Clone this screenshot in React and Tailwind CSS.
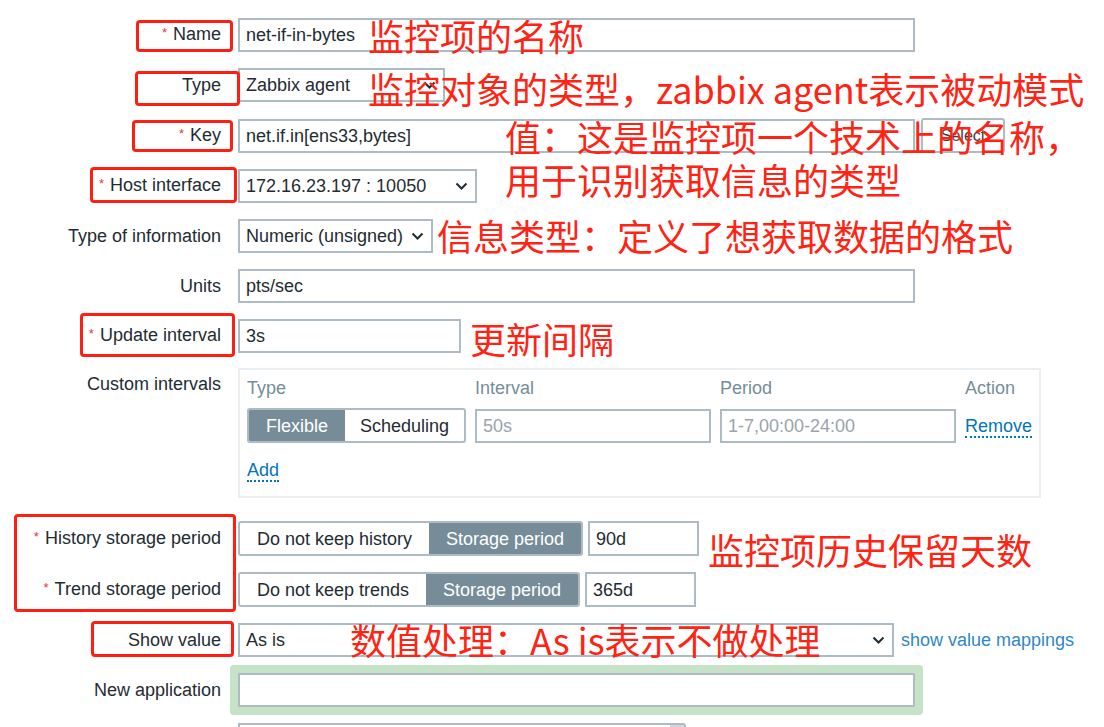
import React from "react"

const inputCls = "h-[34px] border-2 border-[#acbbc4] bg-white px-[6px] flex items-center text-[#1f2c33]"

function Chevron() {
  return (
    <svg width="13" height="8" viewBox="0 0 13 8" className="shrink-0">
      <polyline points="1.5,1.5 6.5,6.5 11.5,1.5" fill="none" stroke="#1f2c33" strokeWidth="2" />
    </svg>
  )
}

function Row({ label, req, top, children, className = "" }) {
  return (
    <div className={`flex ${top ? "items-start" : "items-center"} ${className}`}>
      <div className={`w-[221px] shrink-0 text-right text-[#1f2c33] ${top ? "pt-[6px]" : ""}`}>
        {req && <span className="text-[#e33734] text-[13px] relative -top-[3px] mr-[6px]">*</span>}
        {label}
      </div>
      <div className="ml-[17px] flex items-center">{children}</div>
    </div>
  )
}

function Select({ value, w }) {
  return (
    <div className={`${inputCls} justify-between pr-[7px] ${w}`}>
      <span>{value}</span>
      <Chevron />
    </div>
  )
}

function Segmented({ items, active, widths }) {
  return (
    <div className="flex h-[35px] rounded-[3px] border-2 border-[#acbbc4] overflow-hidden bg-white">
      {items.map((it, i) => (
        <div
          key={it}
          className={`flex items-center justify-center ${widths[i]} ${
            i === active ? "bg-[#768d99] text-white" : "text-[#1f2c33]"
          }`}
        >
          {it}
        </div>
      ))}
    </div>
  )
}

const notes = [
  { t: "监控项的名称", x: "left-[368px]", y: "top-[17px]" },
  { t: "监控对象的类型，zabbix agent表示被动模式", x: "left-[368px]", y: "top-[70px]" },
  { t: "值：这是监控项一个技术上的名称，", x: "left-[505px]", y: "top-[118px]" },
  { t: "用于识别获取信息的类型", x: "left-[505px]", y: "top-[161px]" },
  { t: "信息类型：定义了想获取数据的格式", x: "left-[437px]", y: "top-[217px]" },
  { t: "更新间隔", x: "left-[470px]", y: "top-[320px]" },
  { t: "监控项历史保留天数", x: "left-[708px]", y: "top-[531px]" },
  { t: "数值处理：As is表示不做处理", x: "left-[350px]", y: "top-[621px]" },
]

const boxes = [
  "left-[136px] top-[20px] w-[97px] h-[32px]",
  "left-[135px] top-[71px] w-[105px] h-[35px]",
  "left-[132px] top-[120px] w-[101px] h-[32px]",
  "left-[90px] top-[167px] w-[147px] h-[36px]",
  "left-[80px] top-[313px] w-[155px] h-[44px]",
  "left-[14px] top-[514px] w-[222px] h-[98px]",
  "left-[91px] top-[621px] w-[143px] h-[36px]",
]

export default function App() {
  return (
    <div className="relative w-[1104px] h-[727px] overflow-hidden bg-white text-[18px] leading-[20px] font-['Liberation_Sans',Arial,sans-serif]">
      <div className="flex flex-col gap-4 pt-[18px]">
        <Row label="Name" req>
          <div className={`${inputCls} w-[677px]`}>net-if-in-bytes</div>
        </Row>
        <Row label="Type">
          <Select value="Zabbix agent" w="w-[207px]" />
        </Row>
        <Row label="Key" req>
          <div className={`${inputCls} w-[677px]`}>net.if.in[ens33,bytes]</div>
          <div className="ml-[6px] h-[35px] w-[84px] rounded-[3px] border-2 border-[#acbbc4] bg-white flex items-center justify-center text-[16px] text-[#3b3b3b]">
            Select
          </div>
        </Row>
        <Row label="Host interface" req>
          <Select value="172.16.23.197 : 10050" w="w-[239px]" />
        </Row>
        <Row label="Type of information">
          <Select value="Numeric (unsigned)" w="w-[195px]" />
        </Row>
        <Row label="Units">
          <div className={`${inputCls} w-[677px]`}>pts/sec</div>
        </Row>
        <Row label="Update interval" req>
          <div className={`${inputCls} w-[223px]`}>3s</div>
        </Row>
        <Row label="Custom intervals" top className="-mt-[1px]">
          <div className="w-[803px] border-2 border-[#ebeef0] pt-[8px] px-[7px] pb-[16px]">
            <div className="grid grid-cols-[219px_236px_236px_1fr] gap-x-[9px] text-[#768d99]">
              <div>Type</div>
              <div>Interval</div>
              <div>Period</div>
              <div>Action</div>
            </div>
            <div className="grid grid-cols-[219px_236px_236px_1fr] gap-x-[9px] mt-[10px] items-center">
              <Segmented items={["Flexible", "Scheduling"]} active={0} widths={["w-[98px]", "w-[121px]"]} />
              <div className={`${inputCls} text-[#9aa4aa]`}>50s</div>
              <div className={`${inputCls} text-[#9aa4aa]`}>1-7,00:00-24:00</div>
              <div>
                <span className="text-[#0275b8] border-b-2 border-dotted border-[#0275b8]">Remove</span>
              </div>
            </div>
            <div className="mt-[17px]">
              <span className="text-[#0275b8] border-b-2 border-dotted border-[#0275b8]">Add</span>
            </div>
          </div>
        </Row>
        <Row label="History storage period" req className="mt-[7px]">
          <Segmented items={["Do not keep history", "Storage period"]} active={1} widths={["w-[189px]", "w-[152px]"]} />
          <div className={`${inputCls} ml-[5px] w-[111px] h-[35px]`}>90d</div>
        </Row>
        <Row label="Trend storage period" req>
          <Segmented items={["Do not keep trends", "Storage period"]} active={1} widths={["w-[186px]", "w-[152px]"]} />
          <div className={`${inputCls} ml-[5px] w-[111px] h-[35px]`}>365d</div>
        </Row>
        <Row label="Show value">
          <Select value="As is" w="w-[656px]" />
          <span className="ml-[7px] text-[#2f87c8]">show value mappings</span>
        </Row>
        <Row label="New application">
          <div className={`${inputCls} w-[677px] rounded-[1px] shadow-[0_0_0_8px_#c6e3c8]`} />
        </Row>
        <Row label="">
          <div className="h-[34px] w-[448px] border-2 border-[#acbbc4] rounded-tr-[3px] flex justify-end">
            <div className="w-[14px] bg-[#cfd7dc]" />
          </div>
        </Row>
      </div>

      {boxes.map((b) => (
        <div key={b} className={`absolute ${b} border-[3px] border-[#ff1e12] rounded-[4px]`} />
      ))}
      {notes.map((n) => (
        <div
          key={n.t}
          className={`absolute ${n.x} ${n.y} whitespace-nowrap text-[36px] leading-none text-[#ff2314] font-['Noto_Sans_CJK_SC',sans-serif]`}
        >
          {n.t}
        </div>
      ))}
    </div>
  )
}
